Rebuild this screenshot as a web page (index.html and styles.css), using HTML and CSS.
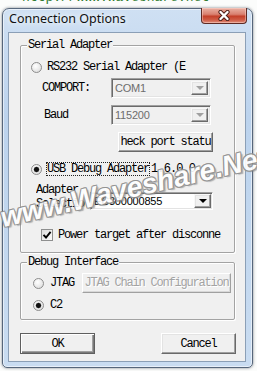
FILE: index.html
```html
<!DOCTYPE html>
<html>
<head>
<meta charset="utf-8">
<link rel="stylesheet" href="styles.css">
</head>
<body>
<div class="desk-url">http://www.waveshare.net</div>
<div class="window">
  <div class="titlebar">
    <div class="title">Connection Options</div>
    <div class="close">
      <svg width="14" height="11" viewBox="0 0 14 11"><path d="M3.5 2 L10.5 9 M10.5 2 L3.5 9" stroke="#4a1d18" stroke-width="4.2" stroke-linecap="round"/><path d="M3.5 2 L10.5 9 M10.5 2 L3.5 9" stroke="#fff" stroke-width="2.4" stroke-linecap="round"/></svg>
    </div>
  </div>
  <div class="client">
    <div class="group g-serial">
      <div class="legend">Serial Adapter</div>
      <div class="row r-rs232"><span class="radio"></span><span>RS232 Serial Adapter (E</span></div>
      <div class="row r-field"><span class="flabel">COMPORT:</span><div class="combo disabled"><span class="ctext">COM1</span><span class="dd"><i class="arrow"></i></span></div></div>
      <div class="row r-field r-baud"><span class="flabel baud-label">Baud</span><div class="combo disabled"><span class="ctext">115200</span><span class="dd"><i class="arrow"></i></span></div></div>
      <div class="row r-checkport"><div class="btn btn-check">heck port statu</div></div>
      <div class="row r-usb"><span class="radio on"></span><span class="focus">USB Debug Adapter</span><span class="version">1.6.0.0</span></div>
      <div class="row r-sel"><div class="sel-label">Adapter Selection</div><div class="combo combo-sel"><span class="ctext">EC300000855</span><span class="dd"><i class="arrow"></i></span></div></div>
      <div class="row r-check"><span class="checkbox"><svg width="10" height="10" viewBox="0 0 10 10"><path d="M1.5 4.8 L4 7.5 L8.6 1.8" fill="none" stroke="#000" stroke-width="1.9"/></svg></span><span>Power target after disconne</span></div>
    </div>
    <div class="group g-debug">
      <div class="legend">Debug Interface</div>
      <div class="row r-jtag"><span class="radio r2"></span><span>JTAG</span><div class="btn btn-jtag">JTAG Chain Configuration</div></div>
      <div class="row r-c2"><span class="radio r2 on"></span><span>C2</span></div>
    </div>
    <div class="actions">
      <div class="btn btn-dlg btn-default">OK</div>
      <div class="btn btn-dlg">Cancel</div>
    </div>
  </div>
</div>
<div class="watermark">www.Waveshare.Net</div>
</body>
</html>
```

FILE: styles.css
```css
* { box-sizing: border-box; }
html, body { margin: 0; padding: 0; }
body {
  width: 257px;
  height: 371px;
  overflow: hidden;
  position: relative;
  background: #fbfcfb;
  font-family: "Liberation Mono", monospace;
  font-size: 12px;
  letter-spacing: -1.2px;
  color: #000;
}
.desk-url {
  position: absolute;
  left: 22px;
  top: -9px;
  font: 13px/13px "Liberation Mono", monospace;
  letter-spacing: 0;
  color: #2f7a2f;
}
.window {
  position: relative;
  z-index: 1;
  margin: 8px 0 0 2px;
  width: 251px;
  height: 360px;
  border: 1px solid #56667b;
  border-radius: 7px 7px 5px 5px;
  background: linear-gradient(180deg, #cfe0f3 0%, #bcd3ed 30%, #c3d8ef 70%, #c9dcf1 100%);
  box-shadow: 0 0 3px rgba(20, 30, 45, .55), inset 0 0 0 1px rgba(255, 255, 255, .55);
  padding: 0 6px 5px 5px;
  display: flex;
  flex-direction: column;
}
.titlebar {
  display: flex;
  align-items: flex-start;
  height: 23px;
  flex: none;
}
.title {
  font: 12.5px/15px "Noto Sans", sans-serif;
  letter-spacing: 0;
  padding: 2px 0 0 1px;
  color: #111;
  text-shadow: 0 0 5px #fff, 0 0 8px #eef5fc;
}
.close {
  margin: -1px -1px 0 auto;
  width: 46px;
  height: 16px;
  border: 1px solid #5d2a24;
  border-top: none;
  border-radius: 0 0 4px 4px;
  background: linear-gradient(180deg, #eab2a4 0%, #d98070 42%, #c4402a 55%, #cf5d47 80%, #e0907d 100%);
  box-shadow: inset 0 0 0 1px rgba(255, 220, 210, .45);
  display: flex;
  align-items: center;
  justify-content: center;
}
.client {
  flex: 1;
  background: #f0f0f0;
  border: 1px solid #8b9fb6;
  padding: 12px 0 0 11px;
}
.group {
  width: 215px;
  border: 1px solid #a3a3a3;
  border-radius: 2px;
  box-shadow: inset 1px 1px 0 #fff, 1px 1px 0 #fff;
}
.g-serial { padding-bottom: 10px; }
.g-debug { margin-top: 9px; padding-bottom: 7px; }
.legend {
  width: fit-content;
  height: 14px;
  line-height: 14px;
  margin: -8px 0 0 6px;
  padding: 0 1px;
  background: #f0f0f0;
}
.row {
  display: flex;
  align-items: center;
  white-space: nowrap;
  line-height: 14px;
}
.radio {
  flex: none;
  width: 11px;
  height: 11px;
  margin-right: 5px;
  border-radius: 50%;
  border: 1px solid #8d8d8d;
  background: radial-gradient(circle at 40% 35%, #ffffff 0, #f2f2f2 35%, #d6d6d6 100%);
}
.radio.on {
  background: radial-gradient(circle at 50% 50%, #101010 0, #101010 2px, #666 2.6px, transparent 3.2px),
              radial-gradient(circle at 40% 35%, #ffffff 0, #f2f2f2 35%, #d6d6d6 100%);
}
.radio.r2 { margin-right: 6px; }
.r-rs232 { margin-top: 8px; height: 14px; padding-left: 10px; }
.r-field { margin-top: 4px; height: 20px; padding-left: 21px; }
.r-baud { margin-top: 7px; }
.flabel { width: 69px; flex: none; }
.baud-label { padding-left: 2px; }
.combo {
  flex: none;
  width: 100px;
  height: 20px;
  display: flex;
  align-items: stretch;
  padding: 2px;
  border: 1px solid;
  border-color: #a0a0a0 #ffffff #ffffff #a0a0a0;
  box-shadow: inset 1px 1px 0 #6a6a6a, inset -1px -1px 0 #e3e3e3;
  font: 11px/14px "Liberation Sans", sans-serif;
  letter-spacing: -0.2px;
}
.ctext {
  flex: 1;
  padding-left: 1px;
  display: flex;
  align-items: center;
  overflow: hidden;
}
.combo.disabled .ctext { color: #6d6d6d; }
.dd {
  flex: none;
  width: 17px;
  background: #f0f0f0;
  border: 1px solid;
  border-color: #f8f8f8 #6a6a6a #6a6a6a #f8f8f8;
  box-shadow: inset -1px -1px 0 #a0a0a0, inset 1px 1px 0 #e3e3e3;
  display: flex;
  align-items: center;
  justify-content: center;
}
.arrow {
  width: 0;
  height: 0;
  border-left: 4px solid transparent;
  border-right: 4px solid transparent;
  border-top: 4px solid #000;
}
.combo.disabled .arrow { border-top-color: #a0a0a0; }
.btn {
  flex: none;
  height: 20px;
  display: flex;
  align-items: center;
  justify-content: center;
  overflow: hidden;
  white-space: nowrap;
  background: #f0f0f0;
  border: 1px solid;
  border-color: #ffffff #696969 #696969 #ffffff;
  box-shadow: inset -1px -1px 0 #a0a0a0, inset 1px 1px 0 #e3e3e3;
}
.r-checkport { margin-top: 7px; padding-left: 97px; }
.btn-check { width: 95px; }
.r-usb { margin-top: 10px; height: 14px; padding-left: 10px; }
.focus { outline: 1px dotted #222; line-height: 12px; }
.version { margin-left: 2px; letter-spacing: -0.9px; }
.r-sel {
  margin-top: 7px;
  height: 28px;
  padding-left: 15px;
  align-items: flex-start;
}
.sel-label {
  flex: none;
  width: 49px;
  height: 28px;
  line-height: 14px;
  white-space: normal;
  overflow: hidden;
}
.combo-sel {
  width: 123px;
  height: 18px;
  margin: 9px 0 0 5px;
  background: #fff;
  padding: 1px;
}
.combo-sel .ctext { padding-left: 2px; }
.r-check { margin-top: 17px; height: 14px; padding-left: 20px; }
.checkbox {
  flex: none;
  width: 12px;
  height: 12px;
  margin-right: 5px;
  border: 1px solid #8e8f8f;
  background: linear-gradient(135deg, #dcdcdc, #fbfbfb);
  display: flex;
  align-items: center;
  justify-content: center;
}
.r-jtag { margin-top: 4px; height: 20px; padding-left: 12px; }
.btn-jtag {
  width: 149px;
  margin-left: 8px;
  color: #a3a3a3;
  text-shadow: 1px 1px 0 #fff;
  border-color: #ffffff #a0a0a0 #a0a0a0 #ffffff;
  box-shadow: inset -1px -1px 0 #d8d8d8;
}
.r-c2 { margin-top: 5px; height: 14px; padding-left: 12px; }
.actions {
  display: flex;
  justify-content: space-between;
  width: 216px;
  margin-top: 13px;
}
.btn-dlg { width: 75px; height: 21px; }
.btn-default {
  border-color: #5f5f5f;
  box-shadow: inset 1px 1px 0 #fff, inset -1px -1px 0 #7a7a7a, inset -2px -2px 0 #a0a0a0;
}
.watermark {
  position: absolute;
  left: 4px;
  top: 204px;
  z-index: 2;
  font: italic bold 28px/28px "Liberation Sans", sans-serif;
  letter-spacing: 0;
  color: #fff;
  white-space: nowrap;
  transform: rotate(-13deg);
  transform-origin: 0 100%;
  text-shadow: 1px 0 0 #8a8a8a, -1px 0 0 #8a8a8a, 0 1px 0 #8a8a8a, 0 -1px 0 #8a8a8a,
               1px 1px 0 #9a9a9a, -1px -1px 0 #9a9a9a, 1px -1px 0 #9a9a9a, -1px 1px 0 #9a9a9a,
               2px 2px 1px rgba(120, 120, 120, .6);
  opacity: 0.9;
  pointer-events: none;
}
```
